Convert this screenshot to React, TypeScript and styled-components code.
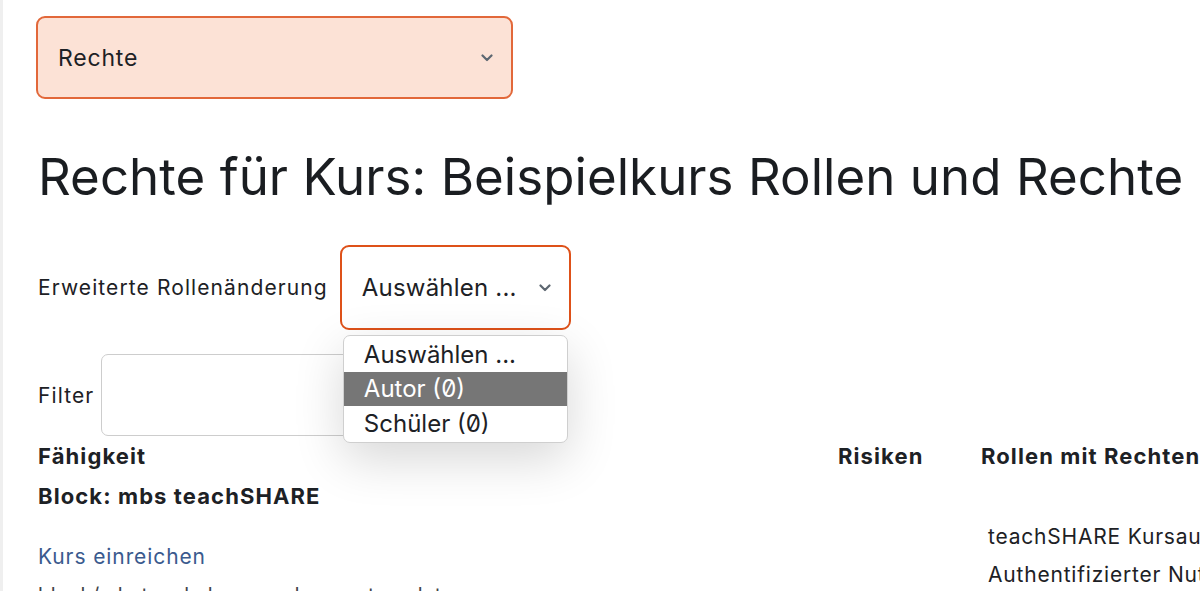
import React from "react";
import styled, { createGlobalStyle } from "styled-components";

const Global = createGlobalStyle`
  html, body { margin: 0; padding: 0; background: #fff; overflow: hidden; }
  body { font-family: Inter, "Noto Sans", sans-serif; color: #1d2125; }
`;

const Page = styled.div`
  width: 1400px;
  height: 591px;
  border-left: 3px solid #efefef;
  box-sizing: border-box;
  padding: 16px 0 0 33px;
`;

const SelectBox = styled.div<{ $tone: "peach" | "white"; $w: number; $h: number }>`
  position: relative;
  box-sizing: border-box;
  width: ${(p) => p.$w}px;
  height: ${(p) => p.$h}px;
  border: 2px solid ${(p) => (p.$tone === "peach" ? "#e2683a" : "#de5119")};
  border-radius: 9px;
  background: ${(p) => (p.$tone === "peach" ? "#fce2d6" : "#fff")};
  display: flex;
  align-items: center;
  justify-content: space-between;
  padding: 0 18px 0 20px;
  font-size: ${(p) => (p.$tone === "peach" ? 23 : 24)}px;
  letter-spacing: ${(p) => (p.$tone === "peach" ? 0.8 : 0.2)}px;
  color: #1d2125;
`;

const Chevron = () => (
  <svg width="12" height="8" viewBox="0 0 12 8">
    <path d="M1.5 1.5 L6 6 L10.5 1.5" fill="none" stroke="#5d6771" strokeWidth="2.2" strokeLinecap="round" strokeLinejoin="round" />
  </svg>
);

const Heading = styled.h1`
  margin: 48px 0 0 2px;
  font-weight: 400;
  font-size: 51px;
  line-height: 60px;
  letter-spacing: 0.05px;
  white-space: nowrap;
  color: #1a1d21;
`;

const Row = styled.div<{ $mt: number; $gap: number }>`
  display: flex;
  align-items: center;
  gap: ${(p) => p.$gap}px;
  margin-top: ${(p) => p.$mt}px;
  margin-left: 2px;
`;

const Label = styled.span`
  font-size: 21px;
  letter-spacing: 1.1px;
  color: #1d2125;
`;

const SelectWrap = styled.div`
  position: relative;
`;

const Menu = styled.div`
  position: absolute;
  top: calc(100% + 5px);
  left: 3px;
  width: 225px;
  box-sizing: border-box;
  border: 1px solid #cfcfcf;
  border-radius: 7px;
  background: #fff;
  overflow: hidden;
  padding: 1px 0 1px;
  box-shadow: 0 16px 50px rgba(0, 0, 0, 0.16);
  z-index: 5;
`;

const Option = styled.div<{ $active?: boolean }>`
  height: 34.5px;
  display: flex;
  align-items: center;
  padding-left: 20px;
  font-size: 24px;
  font-feature-settings: "zero" 1;
  background: ${(p) => (p.$active ? "#767676" : "transparent")};
  color: ${(p) => (p.$active ? "#fff" : "#1d2125")};
`;

const FilterInput = styled.div`
  width: 260px;
  height: 82px;
  box-sizing: border-box;
  border: 1px solid #cdcdcd;
  border-radius: 7px;
  background: #fff;
`;

const Table = styled.div`
  display: grid;
  grid-template-columns: 800px 143px 1fr;
  margin-left: 2px;
  margin-top: 0;
`;

const Th = styled.div`
  font-weight: 700;
  font-size: 22px;
  letter-spacing: 1.1px;
  line-height: 40px;
  white-space: nowrap;
`;

const SectionTitle = styled.div`
  grid-column: 1 / -1;
  font-weight: 700;
  font-size: 22px;
  letter-spacing: 1.1px;
  line-height: 40px;
`;

const Cell = styled.div`
  display: flex;
  flex-direction: column;
`;

const Link = styled.a`
  color: #3a5a8e;
  font-size: 21px;
  letter-spacing: 0.9px;
  text-decoration: none;
  margin-top: 26px;
  line-height: 30px;
`;

const Path = styled.div`
  font-size: 20px;
  letter-spacing: 0.5px;
  color: #3f4449;
  line-height: 30px;
  margin-top: 8px;
`;

const RoleList = styled.div`
  padding-top: 2px;
  padding-left: 7px;
  font-size: 21px;
  letter-spacing: 0.8px;
  line-height: 38px;
  white-space: nowrap;
`;

export default function App() {
  return (
    <>
      <Global />
      <Page>
        <SelectBox $tone="peach" $w={477} $h={83}>
          <span>Rechte</span>
          <Chevron />
        </SelectBox>
        <Heading>Rechte für Kurs: Beispielkurs Rollen und Rechte</Heading>
        <Row $mt={38} $gap={12}>
          <Label>Erweiterte Rollenänderung</Label>
          <SelectWrap>
            <SelectBox $tone="white" $w={231} $h={85}>
              <span>Auswählen ...</span>
              <Chevron />
            </SelectBox>
            <Menu>
              <Option>Auswählen ...</Option>
              <Option $active>Autor (0)</Option>
              <Option>Schüler (0)</Option>
            </Menu>
          </SelectWrap>
        </Row>
        <Row $mt={24} $gap={7}>
          <Label>Filter</Label>
          <FilterInput />
        </Row>
        <Table>
          <Th>Fähigkeit</Th>
          <Th>Risiken</Th>
          <Th>Rollen mit Rechten</Th>
          <SectionTitle>Block: mbs teachSHARE</SectionTitle>
          <Cell>
            <Link href="#">Kurs einreichen</Link>
            <Path>block/mbsteachsharesendcoursetemplate</Path>
          </Cell>
          <Cell />
          <RoleList>
            <div>teachSHARE Kursautor</div>
            <div>Authentifizierter Nutzer</div>
          </RoleList>
        </Table>
      </Page>
    </>
  );
}
